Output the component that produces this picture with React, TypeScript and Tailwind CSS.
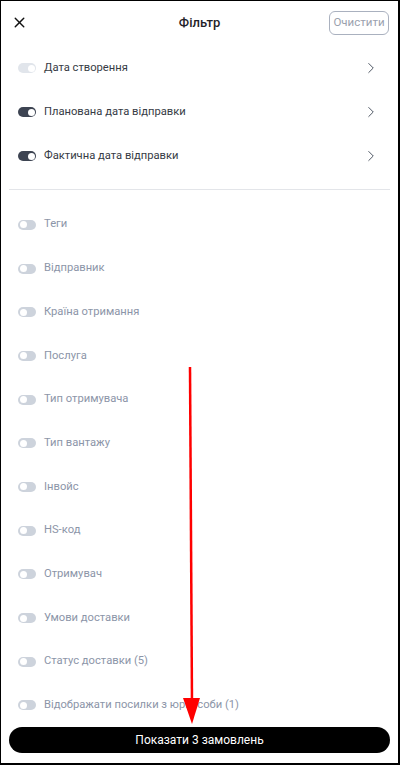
import { X, ChevronRight } from "lucide-react";

interface Row {
  label: string;
  state: "on" | "disabled" | "off";
  chevron?: boolean;
}

const dateRows: Row[] = [
  { label: "Дата створення", state: "disabled", chevron: true },
  { label: "Планована дата відправки", state: "on", chevron: true },
  { label: "Фактична дата відправки", state: "on", chevron: true },
];

const filterRows: Row[] = [
  { label: "Теги", state: "off" },
  { label: "Відправник", state: "off" },
  { label: "Країна отримання", state: "off" },
  { label: "Послуга", state: "off" },
  { label: "Тип отримувача", state: "off" },
  { label: "Тип вантажу", state: "off" },
  { label: "Інвойс", state: "off" },
  { label: "HS-код", state: "off" },
  { label: "Отримувач", state: "off" },
  { label: "Умови доставки", state: "off" },
  { label: "Статус доставки (5)", state: "off" },
  { label: "Відображати посилки з юр. особи (1)", state: "off" },
];

const Toggle = ({ state }: { state: Row["state"] }) => {
  const track =
    state === "on" ? "bg-[#3d4452] justify-end" : state === "disabled" ? "bg-[#e1e5eb] justify-end" : "bg-[#cdd3dc] justify-start";
  return (
    <div className={`flex h-[10px] w-[18px] shrink-0 items-center rounded-full px-[1.5px] ${track}`}>
      <div className="h-[7px] w-[7px] rounded-full bg-white" />
    </div>
  );
};

const FilterRow = ({ row, tall }: { row: Row; tall?: boolean }) => (
  <div className={`flex items-center pl-[17px] pr-[18px] ${tall ? "h-[44px]" : "h-[43.7px]"}`}>
    <Toggle state={row.state} />
    <span
      className={`ml-[8px] flex-1 text-[11.2px] ${row.state === "off" ? "text-[#8c95a8]" : "text-[#363b45]"}`}
    >
      {row.label}
    </span>
    {row.chevron && <ChevronRight className="h-[18px] w-[18px] text-[#4b5361]" strokeWidth={1.3} />}
  </div>
);

export default function App() {
  return (
    <div
      className="relative flex h-[765px] w-[400px] flex-col overflow-hidden border border-r-2 border-b-2 border-black bg-white"
      style={{ fontFamily: "Roboto, 'Noto Sans', sans-serif" }}
    >
      {/* Header */}
      <div className="relative flex h-[44px] shrink-0 items-center justify-center">
        <X className="absolute left-[10px] top-[13px] h-[17px] w-[17px] text-[#111]" strokeWidth={2} />
        <span className="text-[13px] font-medium text-[#1f2329]">Фільтр</span>
        <button className="absolute right-[9px] top-[10px] h-[24px] w-[60px] rounded-[6px] border border-[#aab1bf] text-[11.5px] text-[#9aa1ae]">
          Очистити
        </button>
      </div>

      <div className="mt-[1px]">
        {dateRows.map((row) => (
          <FilterRow key={row.label} row={row} tall />
        ))}
      </div>

      <div className="mx-[8px] mt-[11px] border-t border-[#e3e5e9]" />

      <div className="mt-[13px]">
        {filterRows.map((row) => (
          <FilterRow key={row.label} row={row} />
        ))}
      </div>

      <div className="mt-auto px-[8px] pb-[10px]">
        <button className="h-[26px] w-full rounded-full bg-black text-[12px] text-white">
          Показати 3 замовлень
        </button>
      </div>

      {/* red annotation arrow */}
      <svg className="pointer-events-none absolute left-0 top-0" width="400" height="765">
        <line x1="189" y1="366" x2="191" y2="702" stroke="#f00" strokeWidth="2.5" />
        <polygon points="182,697 199,697 191,723" fill="#f00" />
      </svg>
    </div>
  );
}
